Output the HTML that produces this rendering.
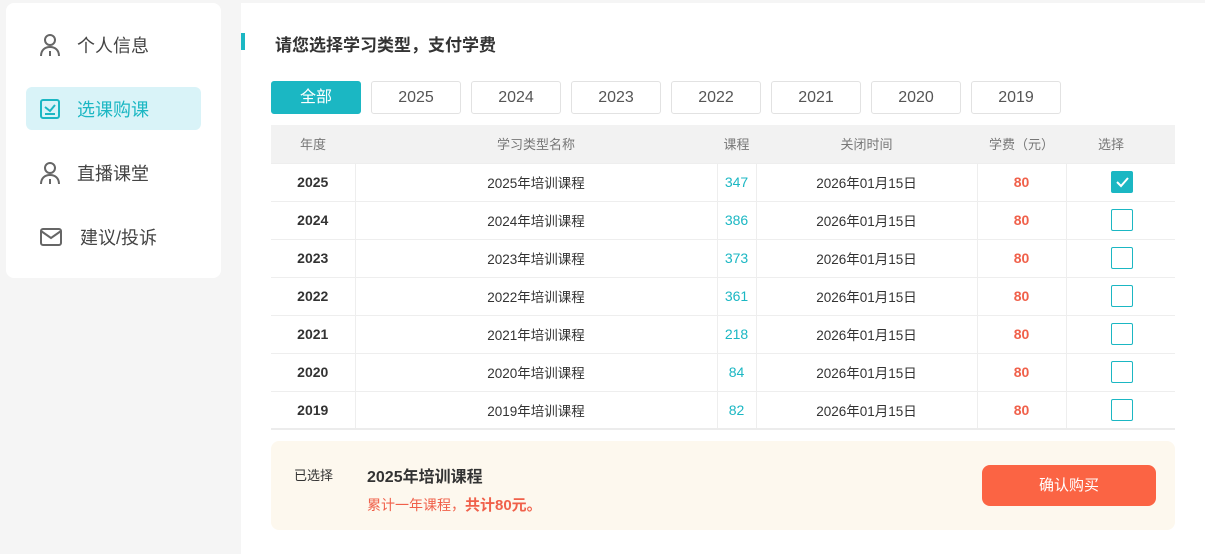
<!DOCTYPE html>
<html><head><meta charset="utf-8"><style>
*{margin:0;padding:0;box-sizing:border-box}
body{width:1205px;height:554px;background:#f5f5f5;font-family:"Liberation Sans","Noto Sans CJK SC",sans-serif;color:#333;position:relative;overflow:hidden}
.side{position:absolute;left:6px;top:3px;width:215px;height:275px;background:#fff;border-radius:8px}
.item{position:absolute;left:20px;width:175px;height:43px;display:flex;align-items:center;font-size:18px;color:#444;border-radius:6px}
.item svg{position:absolute;left:13px}
.item span{position:absolute;left:51px}
.item.act{background:#d9f3f8;color:#1bb7c3}
.main{position:absolute;left:241px;top:3px;width:964px;height:551px;background:#fff}
.bar{position:absolute;left:0;top:30px;width:4px;height:17px;background:#1bb7c3}
.title{position:absolute;left:34px;top:28px;font-size:17px;font-weight:bold;color:#333}
.btn{position:absolute;top:78px;width:90px;height:33px;border:1px solid #e2e2e2;border-radius:3px;text-align:center;line-height:31px;font-size:16px;color:#555}
.btn.act{background:#1bb7c3;border-color:#1bb7c3;color:#fff}
table{position:absolute;left:30px;top:122px;width:904px;border-collapse:collapse;font-size:14px;border-bottom:2px solid #ececec}
th{background:#f2f2f2;height:38px;font-weight:normal;color:#777;font-size:13px}
td{height:38px;border-top:1px solid #eee;text-align:center;color:#333;font-size:13.5px}
td+td{border-left:1px solid #eee}
td.y{font-weight:bold;font-size:14px}
td.n{color:#1bb7c3;font-size:14px}
td.p{color:#f0604a;font-weight:bold;font-size:14px}
.cb{display:inline-block;width:22px;height:22px;border:1px solid #1bb7c3;border-radius:2px;vertical-align:middle;margin-left:2px}
.cb.on{background:#1bb7c3}
.sum{position:absolute;left:30px;top:438px;width:904px;height:89px;background:#fdf8ee;border-radius:8px}
.buy{position:absolute;left:711px;top:24px;width:174px;height:41px;background:#fb6444;border-radius:8px;color:#fff;text-align:center;line-height:41px;font-size:15px}
</style></head><body>
<div class="side">
 <div class="item" style="top:20px"><svg width="22" height="24" viewBox="0 0 22 24" fill="none" stroke="#666" stroke-width="2"><circle cx="11" cy="7" r="5"/><path d="M2 23c0-6 4-9 9-9s9 3 9 9M11 18v5"/></svg><span>个人信息</span></div>
 <div class="item act" style="top:84px"><svg width="22" height="22" viewBox="0 0 22 22" fill="none" stroke="#1bb7c3" stroke-width="2"><rect x="2" y="2" width="18" height="18" rx="2"/><path d="M6 9l5 4 5-6M6 16h10"/></svg><span>选课购课</span></div>
 <div class="item" style="top:148px"><svg width="22" height="24" viewBox="0 0 22 24" fill="none" stroke="#666" stroke-width="2"><circle cx="11" cy="7" r="5"/><path d="M2 23c0-6 4-9 9-9s9 3 9 9M11 18v5"/></svg><span>直播课堂</span></div>
 <div class="item" style="top:212px"><svg width="24" height="20" viewBox="0 0 24 20" fill="none" stroke="#666" stroke-width="2"><rect x="2" y="2" width="20" height="16" rx="2"/><path d="M2 4l10 7 10-7"/></svg><span style="left:54px">建议/投诉</span></div>
</div>
<div class="main">
 <div class="bar"></div><div class="title">请您选择学习类型，支付学费</div>
 <div class="btn act" style="left:30px">全部</div>
 <div class="btn" style="left:130px">2025</div><div class="btn" style="left:230px">2024</div><div class="btn" style="left:330px">2023</div><div class="btn" style="left:430px">2022</div><div class="btn" style="left:530px">2021</div><div class="btn" style="left:630px">2020</div><div class="btn" style="left:730px">2019</div>
 <table>
  <colgroup><col style="width:84px"><col style="width:362px"><col style="width:39px"><col style="width:221px"><col style="width:89px"><col style="width:109px"></colgroup>
  <tr><th>年度</th><th>学习类型名称</th><th>课程</th><th>关闭时间</th><th>学费（元）</th><th style="text-align:left;padding-left:32px">选择</th></tr>
  <tr><td class="y">2025</td><td>2025年培训课程</td><td class="n">347</td><td>2026年01月15日</td><td class="p">80</td><td><span class="cb on"><svg width="20" height="20" viewBox="0 0 20 20"><path d="M5 10l4 4 7-8" fill="none" stroke="#fff" stroke-width="2"/></svg></span></td></tr>
  <tr><td class="y">2024</td><td>2024年培训课程</td><td class="n">386</td><td>2026年01月15日</td><td class="p">80</td><td><span class="cb"></span></td></tr>
  <tr><td class="y">2023</td><td>2023年培训课程</td><td class="n">373</td><td>2026年01月15日</td><td class="p">80</td><td><span class="cb"></span></td></tr>
  <tr><td class="y">2022</td><td>2022年培训课程</td><td class="n">361</td><td>2026年01月15日</td><td class="p">80</td><td><span class="cb"></span></td></tr>
  <tr><td class="y">2021</td><td>2021年培训课程</td><td class="n">218</td><td>2026年01月15日</td><td class="p">80</td><td><span class="cb"></span></td></tr>
  <tr><td class="y">2020</td><td>2020年培训课程</td><td class="n">84</td><td>2026年01月15日</td><td class="p">80</td><td><span class="cb"></span></td></tr>
  <tr><td class="y">2019</td><td>2019年培训课程</td><td class="n">82</td><td>2026年01月15日</td><td class="p">80</td><td><span class="cb"></span></td></tr>
 </table>
 <div class="sum">
  <div style="position:absolute;left:23px;top:24px;font-size:13px;color:#333">已选择</div>
  <div style="position:absolute;left:96px;top:22px;font-size:16px;font-weight:bold;color:#333">2025年培训课程</div>
  <div style="position:absolute;left:96px;top:53px;font-size:14px;color:#f0604a">累计一年课程，<b style="font-size:15px">共计80元。</b></div>
  <div class="buy">确认购买</div>
 </div>
</div>
</body></html>
